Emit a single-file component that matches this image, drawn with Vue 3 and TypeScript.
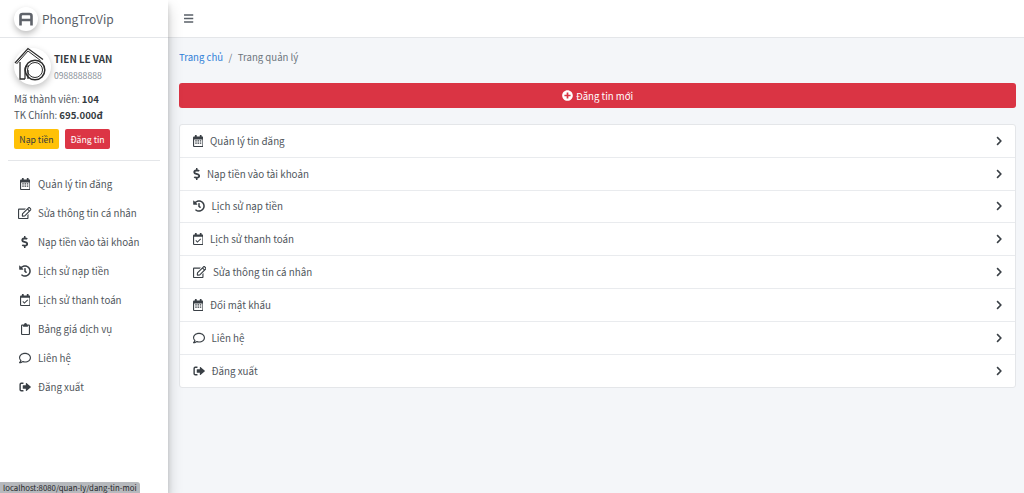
<script setup lang="ts">
const sideItems: { icon: string; w: number; label: string }[] = [
  { icon: 'calendar', w: 10.5, label: 'Quản lý tin đăng' },
  { icon: 'edit', w: 13.5, label: 'Sửa thông tin cá nhân' },
  { icon: 'dollar', w: 7.5, label: 'Nạp tiền vào tài khoản' },
  { icon: 'history', w: 12, label: 'Lịch sử nạp tiền' },
  { icon: 'check', w: 10.5, label: 'Lịch sử thanh toán' },
  { icon: 'clipboard', w: 9, label: 'Bảng giá dịch vụ' },
  { icon: 'comment', w: 12, label: 'Liên hệ' },
  { icon: 'signout', w: 12, label: 'Đăng xuất' },
]
const listItems: { icon: string; w: number; label: string }[] = [
  { icon: 'calendar', w: 10.5, label: 'Quản lý tin đăng' },
  { icon: 'dollar', w: 7.5, label: 'Nạp tiền vào tài khoản' },
  { icon: 'history', w: 12, label: 'Lịch sử nạp tiền' },
  { icon: 'check', w: 10.5, label: 'Lịch sử thanh toán' },
  { icon: 'edit', w: 13.5, label: 'Sửa thông tin cá nhân' },
  { icon: 'calendar', w: 10.5, label: 'Đổi mật khẩu' },
  { icon: 'comment', w: 12, label: 'Liên hệ' },
  { icon: 'signout', w: 12, label: 'Đăng xuất' },
]
</script>

<template>
  <svg class="defs" aria-hidden="true">
    <symbol id="calendar" viewBox="0 0 448 512">
      <path fill="currentColor" d="M96 0h48a16 16 0 0 1 16 16v48h128V16a16 16 0 0 1 16-16h48a16 16 0 0 1 16 16v48h32a48 48 0 0 1 48 48v352a48 48 0 0 1-48 48H48a48 48 0 0 1-48-48V112a48 48 0 0 1 48-48h32V16A16 16 0 0 1 96 0zM48 192v266a6 6 0 0 0 6 6h340a6 6 0 0 0 6-6V192zM96 224h64v48H96zm96 0h64v48h-64zm96 0h64v48h-64zM96 320h64v48H96zm96 0h64v48h-64zm96 0h64v48h-64z" fill-rule="evenodd" />
    </symbol>
    <symbol id="check" viewBox="0 0 448 512">
      <path fill="currentColor" d="M96 0h48a16 16 0 0 1 16 16v48h128V16a16 16 0 0 1 16-16h48a16 16 0 0 1 16 16v48h32a48 48 0 0 1 48 48v352a48 48 0 0 1-48 48H48a48 48 0 0 1-48-48V112a48 48 0 0 1 48-48h32V16A16 16 0 0 1 96 0zM48 160v298a6 6 0 0 0 6 6h340a6 6 0 0 0 6-6V160z" fill-rule="evenodd" />
      <path fill="none" stroke="currentColor" stroke-width="44" d="M118 318l70 68 142-140" />
    </symbol>
    <symbol id="edit" viewBox="0 0 576 512">
      <path fill="currentColor" d="M402.3 344.9l32-32c5-5 13.7-1.5 13.7 5.7V464c0 26.5-21.5 48-48 48H48c-26.5 0-48-21.5-48-48V112c0-26.5 21.5-48 48-48h273.5c7.1 0 10.7 8.6 5.7 13.7l-32 32c-1.5 1.5-3.5 2.3-5.7 2.3H48v352h352V350.5c0-2.1.8-4.1 2.3-5.6zm156.6-201.8L296.3 405.7l-90.4 10c-26.2 2.9-48.5-19.2-45.6-45.6l10-90.4L432.9 17.1c22.9-22.9 59.9-22.9 82.7 0l43.2 43.2c22.9 22.9 22.9 60 .1 82.8zM460.1 174L402 115.9 216.2 301.8l-7.3 65.3 65.3-7.3L460.1 174zm64.8-79.7l-43.2-43.2c-4.1-4.1-10.8-4.1-14.8 0L436 82l58.1 58.1 30.9-30.9c4-4.2 4-10.8-.1-14.9z" />
    </symbol>
    <symbol id="dollar" viewBox="0 0 288 512">
      <path fill="currentColor" d="M209.2 233.4l-108-31.6C88.7 198.2 80 186.5 80 173.5c0-16.3 13.2-29.5 29.5-29.5h66.3c12.2 0 24.2 3.7 34.2 10.5 6.1 4.1 14.3 3.1 19.5-2l34.8-34c7.1-6.9 6.1-18.4-1.8-24.5C238 74.8 207.4 64.1 176 64V16c0-8.8-7.2-16-16-16h-32c-8.8 0-16 7.2-16 16v48h-2.5C45.8 64-5.4 118.7.5 183.6c4.2 46.1 39.4 83.6 83.8 96.6l102.5 30c12.5 3.7 21.2 15.3 21.2 28.3 0 16.3-13.2 29.5-29.5 29.5h-66.3C100 368 88 364.3 78 357.5c-6.1-4.1-14.3-3.1-19.5 2l-34.8 34c-7.1 6.9-6.1 18.4 1.8 24.5 24.5 19.2 55.1 29.9 86.5 30v48c0 8.8 7.2 16 16 16h32c8.8 0 16-7.2 16-16v-48.2c46.6-.9 90.3-28.6 105.7-72.7 21.5-61.6-14.6-124.8-72.5-141.7z" />
    </symbol>
    <symbol id="history" viewBox="0 0 512 512">
      <path fill="currentColor" d="M504 255.531c.253 136.64-111.18 248.372-247.82 248.468-59.015.042-113.223-20.53-155.822-54.911-11.077-8.94-11.905-25.541-1.839-35.607l11.267-11.267c8.609-8.609 22.353-9.551 31.891-1.984C173.062 425.135 212.781 440 256 440c101.705 0 184-82.311 184-184 0-101.705-82.311-184-184-184-48.814 0-93.149 18.969-126.068 49.932l50.754 50.754c10.08 10.08 2.941 27.314-11.313 27.314H24c-8.837 0-16-7.163-16-16V38.627c0-14.254 17.234-21.393 27.314-11.314l49.372 49.372C129.209 34.136 189.552 8 256 8c136.81 0 247.747 110.78 248 247.531zm-180.912 78.784l9.823-12.63c8.138-10.463 6.253-25.542-4.21-33.679L288 256.349V152c0-13.255-10.745-24-24-24h-16c-13.255 0-24 10.745-24 24v135.651l65.409 50.874c10.463 8.137 25.541 6.253 33.679-4.21z" />
    </symbol>
    <symbol id="clipboard" viewBox="0 0 384 512">
      <path fill="currentColor" fill-rule="evenodd" d="M128 64a64 64 0 0 1 128 0h80a48 48 0 0 1 48 48v352a48 48 0 0 1-48 48H48a48 48 0 0 1-48-48V112a48 48 0 0 1 48-48zM48 112v346a6 6 0 0 0 6 6h276a6 6 0 0 0 6-6V112h-42v40a12 12 0 0 1-12 12H102a12 12 0 0 1-12-12v-40z" />
    </symbol>
    <symbol id="comment" viewBox="0 0 512 512">
      <path fill="currentColor" d="M256 32C114.6 32 0 125.1 0 240c0 47.6 19.9 91.2 52.9 126.3C38 405.7 7 439.1 6.5 439.5c-6.6 7-8.4 17.2-4.6 26S14.4 480 24 480c61.5 0 110-25.7 139.1-46.3C192 442.8 223.2 448 256 448c141.4 0 256-93.1 256-208S397.4 32 256 32zm0 368c-26.7 0-53.1-4.1-78.4-12.1l-22.7-7.2-19.5 13.8c-14.3 10.1-33.9 21.4-57.5 29 7.3-12.1 14.4-25.7 19.9-40.2l10.6-28.1-20.6-21.8C69.7 314.1 48 282.2 48 240c0-88.2 93.3-160 208-160s208 71.8 208 160-93.3 160-208 160z" />
    </symbol>
    <symbol id="signout" viewBox="0 0 512 512">
      <path fill="none" stroke="currentColor" stroke-width="60" d="M190 96H96a48 48 0 0 0-48 48v224a48 48 0 0 0 48 48h94" />
      <path fill="currentColor" d="M292 98a16 16 0 0 1 27-11l186 158a15 15 0 0 1 0 22L319 425a16 16 0 0 1-27-11v-82H176a16 16 0 0 1-16-16V196a16 16 0 0 1 16-16h116z" />
    </symbol>
    <symbol id="chevron" viewBox="0 0 320 512">
      <path fill="currentColor" d="M285.476 272.971L91.132 467.314c-9.373 9.373-24.569 9.373-33.941 0l-22.667-22.667c-9.357-9.357-9.375-24.522-.04-33.901L188.505 256 34.484 101.255c-9.335-9.379-9.317-24.544.04-33.901l22.667-22.667c9.373-9.373 24.569-9.373 33.941 0L285.475 239.03c9.373 9.372 9.373 24.568.001 33.941z" />
    </symbol>
    <symbol id="plus" viewBox="0 0 512 512">
      <path fill="currentColor" d="M256 8C119 8 8 119 8 256s111 248 248 248 248-111 248-248S393 8 256 8zm144 276c0 6.6-5.4 12-12 12h-92v92c0 6.6-5.4 12-12 12h-56c-6.6 0-12-5.4-12-12v-92h-92c-6.6 0-12-5.4-12-12v-56c0-6.6 5.4-12 12-12h92v-92c0-6.6 5.4-12 12-12h56c6.6 0 12 5.4 12 12v92h92c6.6 0 12 5.4 12 12v56z" />
    </symbol>
    <symbol id="bars" viewBox="0 0 448 512">
      <path fill="currentColor" d="M16 132h416c8.837 0 16-7.163 16-16V76c0-8.837-7.163-16-16-16H16C7.163 60 0 67.163 0 76v40c0 8.837 7.163 16 16 16zm0 160h416c8.837 0 16-7.163 16-16v-40c0-8.837-7.163-16-16-16H16c-8.837 0-16 7.163-16 16v40c0 8.837 7.163 16 16 16zm0 160h416c8.837 0 16-7.163 16-16v-40c0-8.837-7.163-16-16-16H16c-8.837 0-16 7.163-16 16v40c0 8.837 7.163 16 16 16z" />
    </symbol>
  </svg>

  <div class="page">
    <aside class="sidebar">
      <div class="brand">
        <span class="brand-logo">
          <svg width="24" height="24" viewBox="0 0 24 24">
            <path d="M6.5 18.500V9Q6.500 7 8.500 7H15.500Q17.500 7 17.500 9V18.500M6.500 13H17.500" fill="none" stroke="#5f636a" stroke-width="2.600" />
          </svg>
        </span>
        <span class="brand-name">PhongTroVip</span>
      </div>

      <div class="user">
        <div class="user-head">
          <span class="avatar">
            <svg class="avatar-art" width="38" height="38" viewBox="0 0 38 38">
              <g fill="none" stroke="#2c2c2c">
                <path stroke-width="1.300" d="M1 15L14 0.500L29 11.500" />
                <path stroke-width="1" d="M2.500 16L14 3L26.500 12.500" />
                <path stroke-width="1.300" d="M6 14V31H11" />
                <path stroke-width="1.200" d="M11 31V21Q11 18 14 18H15" />
                <path stroke-width="1.200" d="M14 31V22" />
                <circle cx="21" cy="22" r="9.800" stroke-width="1.500" />
                <circle cx="21" cy="22" r="7.500" stroke-width="1" />
              </g>
            </svg>
          </span>
          <div class="user-id">
            <strong class="user-name">TIEN LE VAN</strong>
            <span class="user-phone">0988888888</span>
          </div>
        </div>
        <p class="user-line">Mã thành viên: <strong>104</strong></p>
        <p class="user-line">TK Chính: <strong>695.000đ</strong></p>
        <div class="user-actions">
          <a class="btn btn-yellow">Nạp tiền</a>
          <a class="btn btn-red">Đăng tin</a>
        </div>
      </div>

      <nav class="side-nav">
        <a v-for="item in sideItems" :key="item.label" class="side-link">
          <span class="side-icon">
            <svg class="icon" :style="{ width: item.w + 'px' }"><use :href="'#' + item.icon" /></svg>
          </span>
          <span>{{ item.label }}</span>
        </a>
      </nav>
    </aside>

    <div class="main">
      <header class="topbar">
        <svg class="menu-icon"><use href="#bars" /></svg>
      </header>
      <main class="content">
        <div class="crumbs">
          <a class="crumb-link">Trang chủ</a>
          <span class="crumb-sep">/</span>
          <span class="crumb-current">Trang quản lý</span>
        </div>
        <a class="new-post">
          <svg class="plus-icon"><use href="#plus" /></svg>
          <span>Đăng tin mới</span>
        </a>
        <ul class="list">
          <li v-for="item in listItems" :key="item.label" class="row">
            <span class="row-label">
              <svg class="icon" :style="{ width: item.w + 'px' }"><use :href="'#' + item.icon" /></svg>
              <span>{{ item.label }}</span>
            </span>
            <svg class="chevron"><use href="#chevron" /></svg>
          </li>
        </ul>
      </main>
    </div>

    <div class="status">localhost:8080/quan-ly/dang-tin-moi</div>
  </div>
</template>

<style scoped>
.defs { display: none; }
.page {
  display: flex;
  height: 493px;
  overflow: hidden;
  position: relative;
  font-family: "Noto Sans CJK SC", "Noto Sans", sans-serif;
  font-size: 9.8px;
  color: #50565c;
  background: #f4f6f9;
}
.sidebar {
  width: 168px;
  flex: none;
  background: #fff;
  box-shadow: 0 8px 14px rgba(0,0,0,.2), 0 4px 5px rgba(0,0,0,.15);
  z-index: 2;
  box-sizing: border-box;
}
.brand {
  height: 38px;
  box-sizing: border-box;
  border-bottom: 1px solid #e4e6e9;
  display: flex;
  align-items: center;
  padding-left: 14px;
  gap: 4px;
}
.brand-logo {
  width: 24px;
  height: 24px;
  border-radius: 50%;
  background: #fff;
  box-shadow: 0 3px 6px rgba(0,0,0,.26);
  display: flex;
}
.brand-name { font-size: 12px; color: #5a6068; }
.user { padding: 10px 8px 0 14px; }
.user-head { display: flex; align-items: center; gap: 3px; }
.avatar {
  width: 37px;
  height: 37px;
  border-radius: 50%;
  background: #fff;
  box-shadow: 0 3px 7px rgba(0,0,0,.24);
  display: flex;
}
.avatar-art { overflow: visible; }
.user-id { display: flex; flex-direction: column; gap: 1px; }
.user-name { font-size: 9.8px; color: #343a40; font-weight: 700; line-height: 16px; }
.user-phone { font-size: 8.6px; color: #868e96; line-height: 14px; }
.user-line { margin: 0; line-height: 16px; font-size: 9.65px; }
.user-head + .user-line { margin-top: 6px; }
.user-line strong { color: #343a40; font-weight: 700; }
.user-actions { display: flex; gap: 6px; margin-top: 6px; }
.btn {
  width: 45px;
  height: 20px;
  border-radius: 2px;
  font-size: 8.7px;
  display: flex;
  align-items: center;
  justify-content: center;
}
.btn-yellow { background: #ffc107; color: #343a40; }
.btn-red { background: #dc3545; color: #fff; }
.side-nav {
  margin: 11px 8px 0;
  border-top: 1px solid #e4e6e9;
  padding-top: 8px;
}
.side-link {
  display: flex;
  align-items: center;
  height: 29px;
  padding-left: 10px;
  white-space: nowrap;
  font-size: 9.75px;
}
.side-icon { width: 14px; margin-right: 6px; display: flex; justify-content: center; }
.icon { height: 12px; flex: none; display: block; color: #3a4046; }
.main { flex: 1; display: flex; flex-direction: column; min-width: 0; }
.topbar {
  height: 38px;
  flex: none;
  box-sizing: border-box;
  background: #fff;
  border-bottom: 1px solid #e4e6e9;
  display: flex;
  align-items: center;
  padding-left: 16px;
}
.menu-icon { width: 9.5px; height: 11px; color: #5a6068; }
.content { flex: 1; padding: 11px 8px 0 11px; }
.crumbs { display: flex; align-items: center; height: 16px; font-size: 9.6px; }
.crumb-link { color: #2f80d8; }
.crumb-sep { color: #6c757d; margin: 0 5.5px; }
.crumb-current { color: #6c757d; }
.new-post {
  margin-top: 18px;
  height: 25px;
  border-radius: 3px;
  background: #da3444;
  color: #fff;
  font-size: 9.6px;
  display: flex;
  align-items: center;
  justify-content: center;
  gap: 3px;
}
.plus-icon { width: 11px; height: 11px; }
.list {
  list-style: none;
  margin: 16px 0 0;
  padding: 0;
  background: #fff;
  border: 1px solid #e4e6e9;
  border-radius: 3px;
}
.row {
  height: 32.8px;
  box-sizing: border-box;
  padding: 0 12.5px 0 12.5px;
  display: flex;
  align-items: center;
  justify-content: space-between;
  border-bottom: 1px solid #e9ebee;
  font-size: 9.8px;
}
.row:last-child { border-bottom: 0; }
.row-label { display: flex; align-items: center; white-space: nowrap; gap: 7px; }
.chevron { width: 6.5px; height: 10px; color: #3a4046; }
.status {
  position: absolute;
  left: 0;
  bottom: 0;
  z-index: 5;
  height: 11px;
  width: 140px;
  box-sizing: border-box;
  padding-left: 3px;
  background: #b6b9bd;
  border-top-right-radius: 3px;
  font-size: 7.8px;
  line-height: 11px;
  color: #26282b;
  white-space: nowrap;
  overflow: hidden;
}
</style>
